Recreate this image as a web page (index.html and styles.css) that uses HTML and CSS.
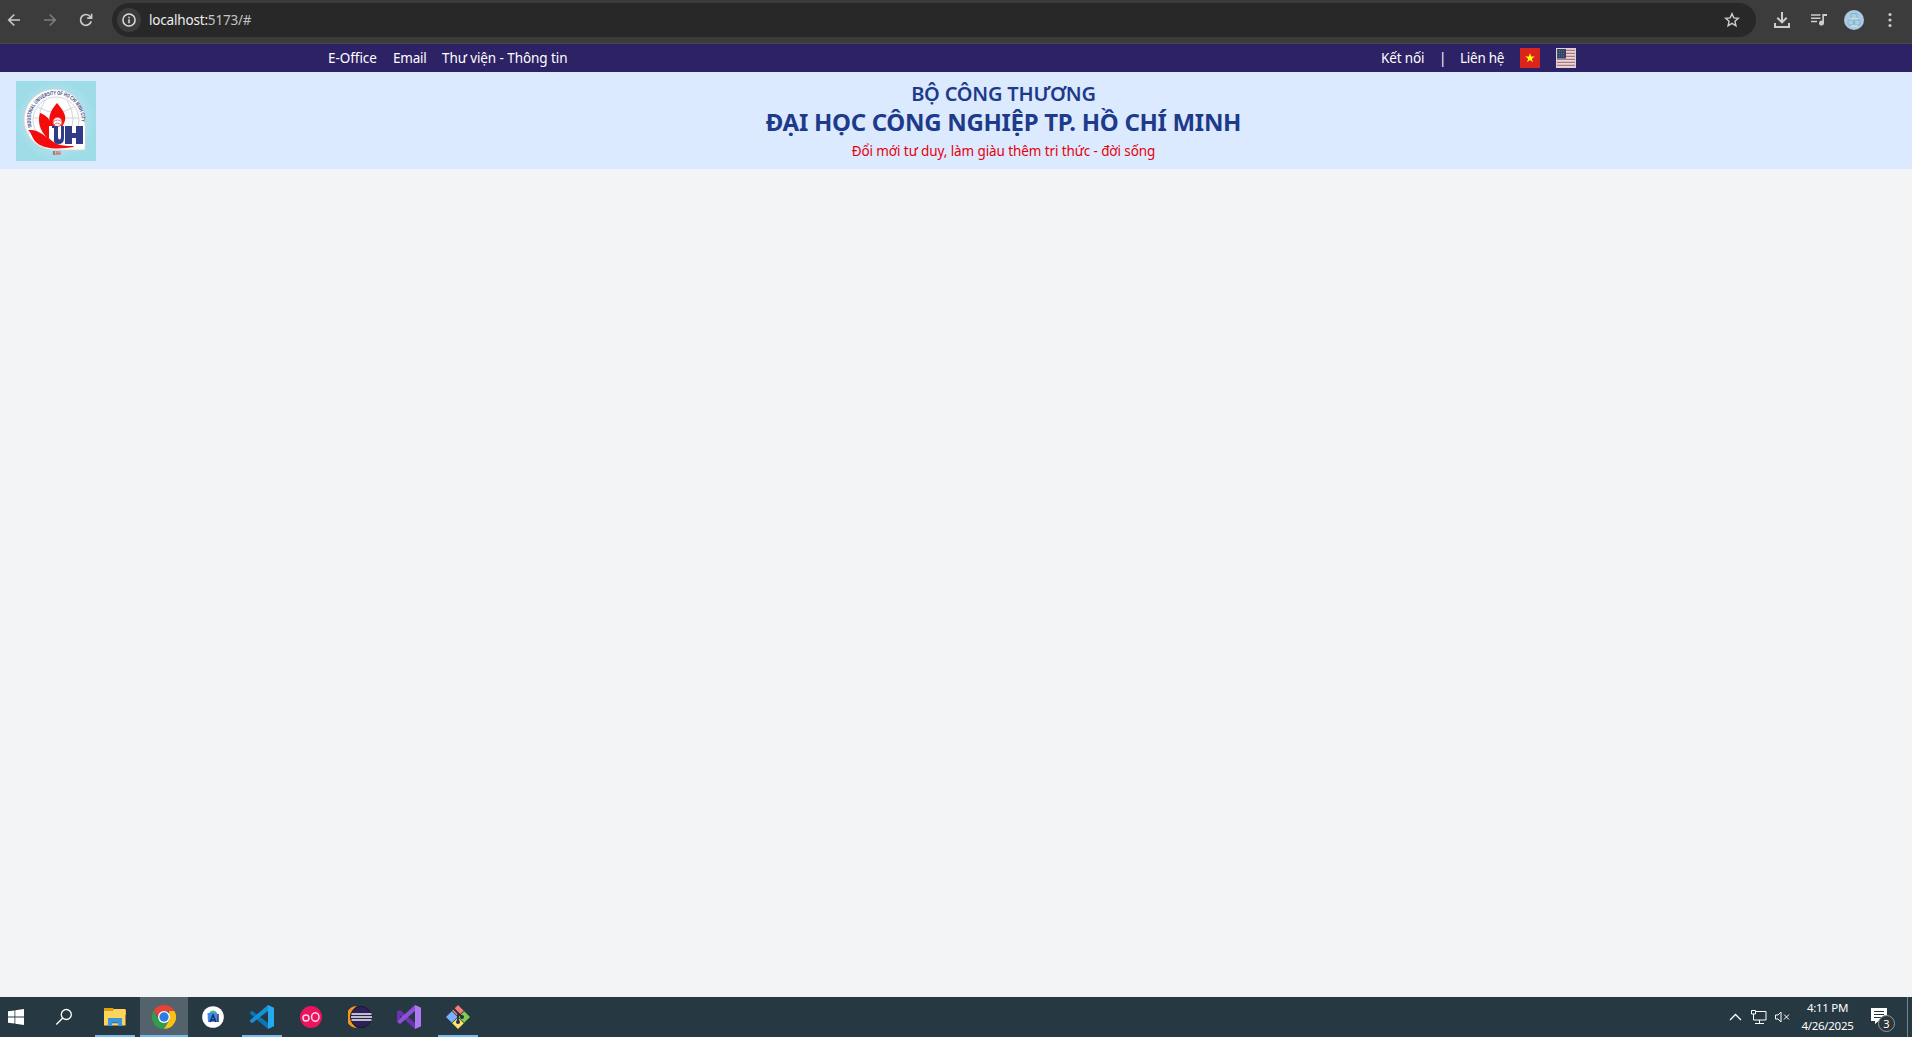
FILE: index.html
```html
<!DOCTYPE html>
<html lang="vi">
<head>
<meta charset="utf-8">
<title>Đại học Công nghiệp TP. Hồ Chí Minh</title>
<link rel="stylesheet" href="styles.css">
</head>
<body>
<div class="browser">
  <svg class="i-back" width="14" height="14" viewBox="0 0 14 14" fill="none" stroke="#c9c9c9" stroke-width="1.7"><path d="M13 7H2M7.3 1.5 1.8 7l5.500 5.500"/></svg>
  <svg class="i-fwd" width="14" height="14" viewBox="0 0 14 14" fill="none" stroke="#7d7d7d" stroke-width="1.7"><path d="M1 7h11M6.700 1.500 12.200 7l-5.500 5.500"/></svg>
  <svg class="i-reload" width="14" height="14" viewBox="0 0 14 14" fill="none" stroke="#c9c9c9" stroke-width="1.700"><path d="M12.200 8.200A5.400 5.400 0 1 1 11.300 3.700L12.600 5M12.600.8v4.400H8.200"/></svg>
  <div class="omnibox">
    <span class="site"><svg width="14" height="14" viewBox="0 0 14 14"><circle cx="7" cy="7" r="6.100" fill="none" stroke="#dedede" stroke-width="1.500"/><path d="M6.250 6.200h1.500v4h-1.500zM6.250 3.700h1.500v1.500h-1.500z" fill="#dedede"/></svg></span>
    <span class="url">localhost:<span class="dim">5173/#</span></span>
    <svg class="i-star" width="16" height="16" viewBox="0 0 16 16"><path d="m8 1.700 1.850 4.200 4.500.4-3.400 3 1 4.500L8 11.400l-3.950 2.400 1-4.500-3.400-3 4.500-.4z" fill="none" stroke="#cfcfcf" stroke-width="1.400"/></svg>
  </div>
  <svg class="i-down" width="18" height="18" viewBox="0 0 18 18" fill="none" stroke="#cdcdcd" stroke-width="2"><path d="M9 1v10M4.300 6.700 9 11.400l4.700-4.700M2 12v4h14v-4"/></svg>
  <svg class="i-music" width="16" height="14" viewBox="0 0 16 14" fill="#cdcdcd"><path d="M0 1.200h9.500v1.500H0zM0 4.500h9.500V6H0zM0 7.800h6v1.500H0zM11.300 1H16v2h-3v7.200a2.500 2.500 0 1 1-1.700-2.500z"/></svg>
  <svg class="i-avatar" width="20" height="20" viewBox="0 0 20 20"><circle cx="10" cy="10" r="10" fill="#acc9e6"/><g fill="#a6d2dd" stroke="#7fa9bf" stroke-width=".8"><rect x="7" y="3.500" width="6" height="5" rx="1"/><rect x="4" y="10" width="5.500" height="5" rx="1"/><rect x="10.500" y="10" width="5.500" height="5" rx="1"/></g><path d="M6 8.700h8M7 16h7" stroke="#d5edf1"/></svg>
  <svg class="i-menu" width="4" height="16" viewBox="0 0 4 16" fill="#c9c9c9"><circle cx="2" cy="2.500" r="1.600"/><circle cx="2" cy="8" r="1.600"/><circle cx="2" cy="13.500" r="1.600"/></svg>
</div>
<nav class="topnav">
  <div class="links"><a class="t-office">E-Office</a><a class="t-email">Email</a><a class="t-lib">Thư viện - Thông tin</a></div>
  <div class="links"><a class="t-connect">Kết nối</a><span class="t-bar">|</span><a class="t-contact">Liên hệ</a>
    <svg class="flag" width="20" height="20" viewBox="0 0 20 20"><path fill="#da251d" d="M0 0h20v20H0z"/><path fill="#ff0" d="m10 5 1.150 3.500h3.600l-2.900 2.150 1.100 3.500L10 12l-2.950 2.150 1.100-3.500L5.250 8.500h3.600z"/></svg>
    <svg class="flag" width="20" height="20" viewBox="0 0 20 20"><path fill="#e0d9db" d="M0 0h20v20H0z"/><path stroke="#b96f7c" stroke-width="1.300" d="M0 2.300h20M0 5.300h20M0 8.300h20M0 11.300h20M0 14.300h20M0 17.300h20"/><path fill="#334264" d="M0 1h10v9.500H0z"/><path stroke="#65748f" stroke-dasharray="1 1" d="M1 3h8M1 5.500h8M1 8h8"/><path d="M.5.500h19v19H.5z" fill="none" stroke="#d7d2d7"/></svg>
  </div>
</nav>
<header class="header">
  <svg class="logo" width="80" height="80" viewBox="0 0 80 80">
    <defs><radialGradient id="lg"><stop offset="0" stop-color="#c5e8f0"/><stop offset=".65" stop-color="#b2e2ec"/><stop offset="1" stop-color="#9edce8"/></radialGradient><path id="arc" d="M15.700 46A25.300 25.300 0 1 1 65 43"/></defs>
    <path fill="url(#lg)" d="M0 0h80v80H0z"/>
    <path d="M69 69H41A30.500 30.500 0 1 1 69 37z" fill="#fdfdfd" stroke="#d5d5cd" stroke-width=".8"/>
    <g fill="none" stroke="#c9cdd0" stroke-width=".8"><circle cx="40" cy="39" r="23"/><path d="M22 26q18 11 36 0M17 37h46M29 19q-12 20 0 38M51 19q12 20 0 38"/></g>
    <text class="ring" textLength="88" lengthAdjust="spacingAndGlyphs"><textPath href="#arc" textLength="88" lengthAdjust="spacingAndGlyphs">INDUSTRIAL UNIVERSITY OF HO CHI MINH CITY</textPath></text>
    <path fill="#f40b0b" d="M41 22c5 6 11 13 7 20l-2 4H35c-4-10 0-17 6-24z"/>
    <path fill="#f40b0b" d="M24 32c8 3 14 9 14 27l-7-2c-6-7-10-15-7-25z"/>
    <path fill="#f40b0b" d="M12 49c13-1 16 8 25 10 9 1 15 1 21 7-13 2-29 3-37-4-5-4-5-10-9-13z"/>
    <path fill="#fff" d="M33 45h36v20H52q-14-1-19-8z"/>
    <circle cx="41.500" cy="41" r="4.500" fill="#fff" stroke="#e56161"/><path d="M37 41q4.500-4 9 0M38 44q3-4 7 0" fill="none" stroke="#ec4444" stroke-width=".8"/>
    <path fill="#303a88" d="M36 45h6v11q0 2.500 1.500 2.500T45 56V45h3v12q0 6-5.500 6T38 57V47h-2zM49 45h7v7h4v-7h7v18h-7v-6h-4v6h-7z"/>
    <text x="37" y="74.300" class="iuh"><tspan fill="#303a88">I</tspan><tspan fill="#ef2020">UH</tspan></text>
  </svg>
  <div class="titles"><p class="ministry"><span>BỘ CÔNG THƯƠNG</span></p><h1><span>ĐẠI HỌC CÔNG NGHIỆP TP. HỒ CHÍ MINH</span></h1><p class="slogan"><span>Đổi mới tư duy, làm giàu thêm tri thức - đời sống</span></p></div>
</header>
<main></main>
<footer class="taskbar">
  <div class="start"><svg width="16" height="16" viewBox="0 0 16 16" fill="#fff"><path d="m0 2.300 6.500-.9v6.200H0zM7.300 1.300 16 0v7.600H7.300zM0 8.400h6.500v6.200L0 13.700zM7.300 8.400H16V16l-8.700-1.200z"/></svg></div>
  <div class="search"><svg width="18" height="18" viewBox="0 0 18 18" fill="none" stroke="#fff" stroke-width="1.300"><circle cx="11.300" cy="6.500" r="5"/><path d="m7.800 10-6.500 6.500"/></svg></div>
  <div class="app open"><svg width="22" height="18" viewBox="0 0 22 18"><path fill="#e4a20b" d="M0 0h9l1.500 2H22v5H0z"/><path fill="#ffd45c" d="M0 3h9l1-2h11.500v16.500H0z"/><path fill="#dda013" d="M0 0h9v1.700L8 3H0z"/><path fill="#3b96dd" d="M4 10h14v8h-4v-4H8v4H4z"/><path fill="#277abb" d="M8 14h6v1.300H8z"/></svg></div>
  <div class="app open active"><svg width="24" height="24" viewBox="0 0 24 24"><path fill="#e94235" d="M1.600 6A12 12 0 0 1 22.400 6H12v12z"/><path fill="#fbc116" d="M22.400 6A12 12 0 0 1 12 24l5.200-9V6z"/><path fill="#2e9e4a" d="M1.600 6A12 12 0 0 0 12 24l5.200-9L6.800 15z"/><circle cx="12" cy="12" r="6" fill="#fff"/><circle cx="12" cy="12" r="4.700" fill="#2a7ce4"/></svg></div>
  <div class="app"><svg width="22" height="22" viewBox="0 0 22 22"><circle cx="11" cy="11" r="10.800" fill="#fff"/><path fill="#4285f4" d="M5.500 7h9.500l1 9H6z"/><path fill="#3ac67a" d="M7 7q1-2.500 4-2.500T15 7z"/><path d="m8 16 3-7 3 7M9 14h4M16 8v8" fill="none" stroke="#16334d" stroke-width="1.400"/></svg></div>
  <div class="app open"><svg width="24" height="24" viewBox="0 0 24 24"><path fill="#0877b9" d="m0 7.500 2-1.700L18 18v6L0 8.800z"/><path fill="#1392d4" d="m0 16.500 2 1.700L18 6V0L0 15.200z"/><path fill="#25a9f3" d="m18 0 6 2.700v18.600L18 24z"/></svg></div>
  <div class="app"><svg width="22" height="22" viewBox="0 0 22 22"><circle cx="11" cy="11" r="11" fill="#eb155f"/><g fill="none" stroke="#ffdce8" stroke-width="1.400"><circle cx="6" cy="12" r="3"/><ellipse cx="15.300" cy="11" rx="3.700" ry="4.300"/></g></svg></div>
  <div class="app"><svg width="24" height="22" viewBox="0 0 24 22"><path fill="#f7941e" d="M9 0A11 11 0 0 0 9 22 13 13 0 0 1 9 0z"/><circle cx="13" cy="11" r="10.600" fill="#2c2255" stroke="#15132c" stroke-width=".8"/><path stroke="#f0f0f4" stroke-width="1.500" d="M3.500 8h20M3 11h21M3.500 14h20"/></svg></div>
  <div class="app"><svg width="24" height="24" viewBox="0 0 24 24"><path fill="#6c33af" d="M0 6.200 3 5l15 13v6L3 10.500v3L0 17z"/><path fill="#8e50d8" d="m0 17 3 2L18 6V0L3 13.500z"/><path fill="#b179f1" d="m18 0 6 2.700v18.600L18 24z"/></svg></div>
  <div class="app open"><svg width="24" height="24" viewBox="0 0 24 24"><path fill="#26323b" d="m12 1 11 11-11 11L1 12z"/><path fill="#f27c78" d="m12 0 5.800 5.800-5.800 5.800-5.800-5.800z"/><path fill="#77b2ff" d="m5.800 6.200 5.800 5.800-5.800 5.800L0 12z"/><path fill="#83ca50" d="m18.200 6.200L24 12l-5.800 5.800-5.800-5.800z"/><path fill="#ffe36b" d="m12 12.400 5.800 5.800L12 24l-5.800-5.800z"/><path d="m7.500 3.500 4.500 4.500v9M12 8l4 4" fill="none" stroke="#26323b" stroke-width="1.800"/><circle cx="12" cy="17" r="2" fill="#26323b"/><circle cx="16" cy="12" r="2" fill="#26323b"/></svg></div>
  <div class="tray">
    <svg width="13" height="8" viewBox="0 0 13 8" fill="none" stroke="#fff" stroke-width="1.300"><path d="m1 7 5.500-5.500L12 7"/></svg>
    <svg width="17" height="15" viewBox="0 0 17 15" fill="none" stroke="#fff"><path d="M6 1.500h10v8.500H3.500V5M9.500 10v3M5 13.500h9M1.500.5h4v3.500h-4zM3.500 4v2"/></svg>
    <svg width="15" height="12" viewBox="0 0 15 12" fill="none" stroke="#fff"><path d="M.5 4h2.500l3-3v10L3 8H.5zM9 3.500l5 5M14 3.500l-5 5"/></svg>
    <div class="clock"><span class="time">4:11 PM</span><span class="date">4/26/2025</span></div>
    <div class="notice"><svg width="17" height="16" viewBox="0 0 17 16"><path fill="#fff" d="M0 0h16v13H7.500L4 16v-3H0z"/><path stroke="#25333b" d="M3 3.500h10M3 6.500h10M3 9.500h7"/></svg><span class="badge">3</span></div>
    <div class="desktop"></div>
  </div>
</footer>
</body>
</html>
```
FILE: styles.css
```css
*{box-sizing:border-box}
body{margin:0;height:1037px;display:flex;flex-direction:column;background:#f3f4f6;font-family:"Noto Sans","Open Sans",sans-serif;overflow:hidden}
svg{display:block;flex:none}
p,h1{margin:0}
span,a{white-space:nowrap}
.browser{height:44px;flex:none;background:#3c3c3c;border-bottom:1px solid #4a4a4a;display:flex;align-items:center;padding:0 20px 3px 7px}
.i-fwd{margin-left:22px}
.i-reload{margin-left:22px}
.omnibox{height:34px;width:1644px;flex:none;margin-left:19px;border-radius:17px;background:#282828;display:flex;align-items:center;padding:0 16px 0 5px}
.site{width:24px;height:24px;border-radius:50%;background:#3c3c3c;display:grid;place-items:center}
.url{margin-left:8px;font-size:13.5px;letter-spacing:-.18px;color:#eee;line-height:20px}
.dim{color:#c3c3c3}
.i-star{margin-left:auto}
.i-down{margin-left:17px}
.i-music{margin-left:20px}
.i-avatar{margin-left:17px}
.i-menu{margin-left:24px}
.topnav{height:28px;flex:none;background:#2e2266;padding:0 336px 0 328px;display:flex;justify-content:space-between;align-items:center;color:#fff;font-size:13.5px;line-height:20px}
.links{display:flex;gap:16px;align-items:center}
.t-office{width:49px;letter-spacing:-.05px}
.t-email{width:33px;letter-spacing:-.25px}
.t-lib{width:126px;letter-spacing:-.08px}
.t-connect{width:44px;letter-spacing:-.15px}
.t-bar{width:3px;text-indent:-2px}
.t-contact{width:44px;letter-spacing:-.25px}
.header{height:97px;flex:none;background:#dbeafe;display:flex;align-items:center;padding:0 16px}
.logo{margin:0 15px -1px 0}
.ring{font:bold 5.500px "Liberation Sans",sans-serif;fill:#3b4686}
.iuh{font:bold 4.500px "Liberation Sans",sans-serif}
.titles{flex:1;text-align:center}
.ministry{font-size:20px;font-weight:600;line-height:26px;letter-spacing:-.2px;color:#1e3a8a}
h1{font-size:24px;font-weight:700;line-height:30px;letter-spacing:-.3px;padding-bottom:4px;color:#1e3a8a}
.slogan{font-size:13.500px;line-height:20px;letter-spacing:-.1px;color:#e7000b}
main{flex:1}
.taskbar{height:40px;flex:none;background:#263842;display:flex;gap:1px}
.start{width:32px;display:grid;place-items:center}
.search{width:48px;margin:0 2px 0 7px;display:grid;place-items:center}
.app{width:48px;display:grid;place-items:center;background-repeat:no-repeat;background-position:bottom center;background-size:40px 2px}
.open{background-image:linear-gradient(#76b9ed,#76b9ed)}
.active{background-color:#53626b;background-size:48px 2px}
.tray{margin-left:auto;display:flex;align-items:center;color:#fff}
.tray svg+svg{margin-left:8px}
.clock{margin-left:11px;width:53px;display:flex;flex-direction:column;align-items:center;font-size:11.500px;line-height:18px}
.clock span{letter-spacing:-.3px}
.notice{width:25px;height:24px;margin-left:17px;position:relative;padding-top:3px}
.badge{position:absolute;left:7px;top:10px;width:17px;height:17px;border-radius:50%;border:1px solid #91989c;background:#30373c;font-size:11px;line-height:15px;text-align:center}
.desktop{height:40px;width:5px;margin-left:11px;border-left:1px solid #75838a}
```
